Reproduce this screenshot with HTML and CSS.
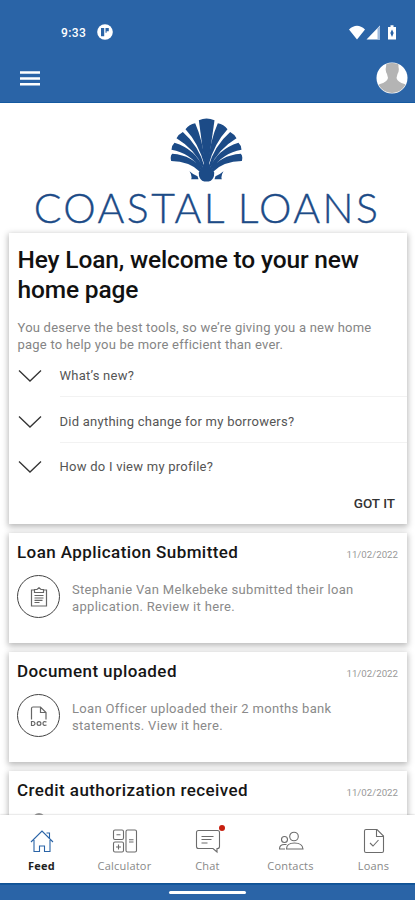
FILE: index.html
```html
<!DOCTYPE html>
<html lang="en">
<head>
<meta charset="utf-8">
<title>Coastal Loans</title>
<link rel="stylesheet" href="styles.css">
</head>
<body>
<div class="app">
  <header class="top">
    <div class="status">
      <span class="clock">9:33</span>
      <svg class="carrier" viewBox="0 0 16 16"><circle cx="8" cy="8" r="7.800" fill="#fff"/><path d="M4 4h3.200v8.300H4zM8.500 4h3.300v3.200H9.600v1.600H8.500z" fill="#2a64a7"/></svg>
      <svg class="signals" viewBox="0 0 48 16" fill="#fff"><path d="M0 4.500Q8-3 16 4.500L8 14.500zM31 .5v14H17.500z"/><path d="M28.500 3.500v11h2.500V1z" fill="#9db9dc"/><path d="M39 2h2.500V.3h3V2H47v12.500h-8V2z"/><path d="M43 4.500l1.700 3.500-1.700 4-1.700-4z" fill="#2a64a7"/></svg>
    </div>
    <div class="toolbar">
      <svg class="menu" viewBox="0 0 20 15"><path d="M0 1.500h20M0 7.500h20M0 13.300h20" stroke="#fff" stroke-width="2.400"/></svg>
      <svg class="avatar" viewBox="0 0 32 32"><defs><clipPath id="face"><circle cx="16" cy="16" r="15"/></clipPath></defs><circle cx="16" cy="16" r="15.500" fill="#fff"/><path clip-path="url(#face)" d="M10.500 0h12v5q1 4-1 7l-1 4q1 4 8 6l3 2v9H0v-9l4-2q7-2 8-6l-1-4q-2-3-1-7z" fill="#b4b4b4"/></svg>
    </div>
  </header>

  <main class="feed">
    <div class="brand">
      <svg class="shell" viewBox="508 38 218 192">
        <defs><g id="ribs"><path d="M554 72Q565 57 583 54Q606 105 614 180L611 180Q594 115 554 72zM527 99Q534 86 546 80Q594 122 611 184L607 187Q582 132 527 99zM512 133Q513 119 521 112Q585 132 607 189L602 192Q568 143 512 133zM511 167Q507 152 514 145Q578 150 603 194L597 199Q566 168 511 167zM566 198Q577 208 590 213L593 222L571 222Q575 212 566 198z"/></g></defs>
        <g fill="#1c4b87"><path d="M594 45Q617 34 641 45L622 180H612z"/><use href="#ribs"/><use href="#ribs" transform="matrix(-1 0 0 1 1234 0)"/><path d="M594 201Q604 190 611 172H623Q630 190 640 201Q641 218 630 226Q617 231 604 226Q593 218 594 201z"/></g>
      </svg>
      <div class="wordmark">COASTAL LOANS</div>
    </div>

    <section class="card welcome">
      <h1>Hey Loan, welcome to your new<br>home page</h1>
      <p class="intro">You deserve the best tools, so we’re giving you a new home<br>page to help you be more efficient than ever.</p>
      <ul class="faq">
        <li><svg class="chev" viewBox="0 0 24 14"><path d="M1 1.500L12 12 23 1.500"/></svg><span class="q">What’s new?</span></li>
        <li><svg class="chev" viewBox="0 0 24 14"><path d="M1 1.500L12 12 23 1.500"/></svg><span class="q">Did anything change for my borrowers?</span></li>
        <li><svg class="chev" viewBox="0 0 24 14"><path d="M1 1.500L12 12 23 1.500"/></svg><span class="q">How do I view my profile?</span></li>
      </ul>
      <div class="got">GOT IT</div>
    </section>

    <section class="card event">
      <div class="head"><h2>Loan Application Submitted</h2><time>11/02/2022</time></div>
      <div class="detail">
        <span class="ring"><svg viewBox="0 0 18 20"><path d="M4.500 3H1.500v16h15V3h-3M4.500 2.500h2.500L9 .7l2 1.800h2.500v3h-9zM4.500 8.500h9M4.500 11h9M4.500 13.300h8M4.500 15.500h5"/></svg></span>
        <p>Stephanie Van Melkebeke submitted their loan<br>application. Review it here.</p>
      </div>
    </section>

    <section class="card event">
      <div class="head"><h2>Document uploaded</h2><time>11/02/2022</time></div>
      <div class="detail">
        <span class="ring"><svg viewBox="0 0 18 20"><path d="M1.500 13.500V2.500Q1.500 1 3 1H10.500L16 6.500V13.500M10.500 1v5.500H16M1.500 15.500v4H3q2-.3 2-2t-2-2z"/><circle cx="9" cy="17.500" r="1.900"/><path d="M16.500 16q-3.500-1.300-3.500 1.500t3.500 1.500"/></svg></span>
        <p>Loan Officer uploaded their 2 months bank<br>statements. View it here.</p>
      </div>
    </section>

    <section class="card event">
      <div class="head"><h2>Credit authorization received</h2><time>11/02/2022</time></div>
      <div class="detail"><span class="peek"></span></div>
    </section>
  </main>

  <nav class="tabs">
    <div class="tab active"><svg viewBox="0 0 26 26"><path d="M2 14L13 3 24 14M5 12v11.500h5.500v-5.500h5v5.500H21V12M17.500 5h3v5.500"/></svg><span>Feed</span></div>
    <div class="tab"><svg viewBox="0 0 26 26"><rect x="1.500" y="2" width="10" height="9.500" rx="1.500"/><rect x="1.500" y="14" width="10" height="10" rx="1.500"/><rect x="14" y="2" width="10.500" height="22" rx="1.500"/><path d="M4.500 6.700h4M4 19h5M6.500 16.500v5M17 11.800h4.500M17 14h4.500"/></svg><span>Calculator</span></div>
    <div class="tab"><svg viewBox="0 0 26 26"><path d="M3.500 2.500h19q2 0 2 2v14q0 2-2 2H22v3.500L18 20.500H3.500q-2 0-2-2v-14q0-2 2-2zM6.500 8.500h12M6.500 11.500h10M6.500 15h6"/></svg><i class="dot"></i><span>Chat</span></div>
    <div class="tab"><svg viewBox="0 0 26 26"><circle cx="16" cy="8.500" r="4.300"/><path d="M8.500 21q0-6 8-6t8.500 6z"/><circle cx="6.500" cy="11.500" r="3"/><path d="M7 21H1.500q0-4.500 5-4.500h2"/></svg><span>Contacts</span></div>
    <div class="tab"><svg viewBox="0 0 26 26"><path d="M5 1.500H16l6.500 6.500v15q0 1.500-1.500 1.500H5Q3.500 24.500 3.500 23V3Q3.500 1.500 5 1.500zM15.500 1.500v7H22M9 15l3 3 5.500-6"/></svg><span>Loans</span></div>
  </nav>
  <footer class="gesture"><i></i></footer>
</div>
</body>
</html>
```
FILE: styles.css
```css
* { box-sizing: border-box; }
body { margin: 0; font-family: Roboto, "Liberation Sans", sans-serif; background: #fff; }
h1, h2, p, ul { margin: 0; padding: 0; }
svg { display: block; }
.app { width: 415px; height: 900px; display: flex; flex-direction: column; overflow: hidden; }

.top { flex: none; height: 103px; background: #2a64a7; border-bottom: 1px solid #1459a0; }
.status { height: 54px; padding: 24px 18px 0 61px; display: flex; align-items: flex-start; }
.clock { color: #fff; font-size: 12px; font-weight: 500; line-height: 18px; width: 36px; letter-spacing: .4px; }
.carrier { width: 16px; height: 16px; }
.signals { width: 48px; height: 16px; margin-left: auto; margin-top: 1px; }
.toolbar { height: 48px; padding: 0 7px 0 20px; display: flex; align-items: center; justify-content: space-between; }
.menu { width: 20px; height: 15px; }
.avatar { width: 32px; height: 32px; }

.feed { flex: 1; min-height: 0; overflow: hidden; background: #fff; padding: 0 8px 0 9px; }
.brand { height: 130px; display: flex; flex-direction: column; align-items: center; padding-top: 15px; }
.shell { width: 73px; height: 64px; margin-left: -3px; flex: none; }
.wordmark { font-family: Lato, sans-serif; font-weight: 300; font-size: 41px; line-height: 48px; color: #1c4b87; letter-spacing: 2.4px; word-spacing: -1.5px; -webkit-text-stroke: .35px #1c4b87; white-space: nowrap; margin: 2px 0 0 -2px; }

.card { background: #fff; box-shadow: 0 2px 6px 1px rgba(0, 0, 0, .27); white-space: nowrap; margin-bottom: 8.500px; }
.welcome { height: 291px; padding: 12px 0 0 8.500px; }
h1 { font-size: 24.5px; line-height: 30px; font-weight: 500; color: #111; letter-spacing: -.15px; }
.intro { margin-top: 14px; font-size: 13px; line-height: 17px; color: #858585; letter-spacing: .23px; }
.faq { list-style: none; }
.faq li { height: 45.5px; display: flex; }
.chev { width: 24px; height: 14px; margin: 16px 18px 0 0; fill: none; stroke: #333; stroke-width: 1.3; }
.q { flex: 1; border-bottom: 1px solid #f2f2f2; line-height: 17px; padding-top: 14px; height: 44px; font-size: 13px; color: #555; letter-spacing: .25px; }
.faq li:last-child .q { border: 0; }
.got { text-align: right; padding-right: 12px; margin-top: 3px; font-size: 13.5px; line-height: 20px; font-weight: 500; color: #333; }

.event { height: 110.500px; padding: 7.5px 9px 0 8px; }
.head { display: flex; justify-content: space-between; align-items: flex-start; height: 35px; }
h2 { font-size: 17px; line-height: 24px; font-weight: 500; color: #161616; letter-spacing: .42px; }
time { font-size: 9.7px; line-height: 14px; color: #999; padding-top: 8px; }
.detail { display: flex; }
.ring { width: 43px; height: 43px; border: 1px solid #444; border-radius: 50%; margin-right: 12px; display: flex; align-items: center; justify-content: center; }
.ring svg { width: 18px; height: 20px; fill: none; stroke: #666; stroke-width: 1.2; }
.detail p { font-size: 13px; line-height: 17px; color: #8a8a8a; padding-top: 6px; letter-spacing: .32px; }
.peek { width: 12px; height: 12px; border: 2px solid #999; border-radius: 50%; margin-left: 16px; }

.tabs { flex: none; height: 68px; background: #fff; position: relative; box-shadow: 0 0 2px rgba(0, 0, 0, .25); display: flex; }
.tab { width: 83px; position: relative; display: flex; flex-direction: column; align-items: center; padding-top: 13px; font-family: "Open Sans", sans-serif; font-size: 11px; color: #888; letter-spacing: .2px; }
.tab svg { width: 26px; height: 26px; fill: none; stroke: #6c6c6c; stroke-width: 1.1; }
.tab span { line-height: 16px; margin-top: 4px; }
.tab.active { font-weight: 700; color: #222; }
.tab.active svg { stroke: #2a64a7; }
.dot { position: absolute; left: 53px; top: 10px; width: 6px; height: 6px; border-radius: 50%; background: #c71f0f; }
.gesture { flex: none; height: 17px; background: #2a64a7; border-top: 2px solid #1459a0; display: flex; justify-content: center; }
.gesture i { width: 77px; height: 3px; margin-top: 6px; border-radius: 2px; background: #fff; }
```
